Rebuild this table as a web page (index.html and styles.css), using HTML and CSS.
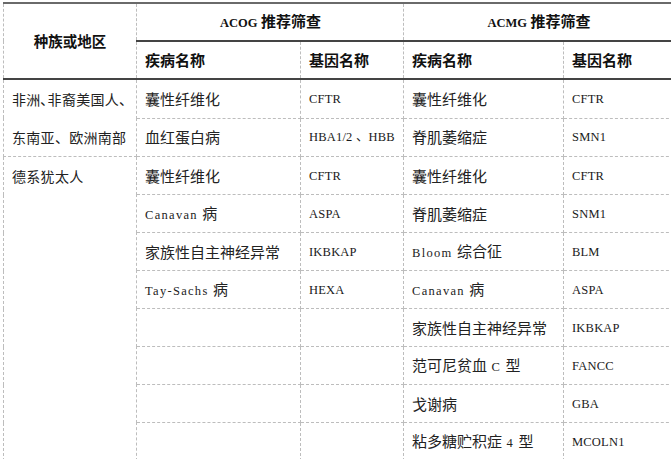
FILE: index.html
```html
<!DOCTYPE html>
<html lang="zh">
<head>
<meta charset="utf-8">
<title>携带者筛查推荐</title>
<link rel="stylesheet" href="styles.css">
</head>
<body>
<table class="screen">
  <colgroup>
    <col class="c-region">
    <col class="c-dis1">
    <col class="c-gene1">
    <col class="c-dis2">
    <col class="c-gene2">
  </colgroup>
  <thead>
    <tr>
      <th class="region-h" rowspan="2">种族或地区</th>
      <th class="group" colspan="2"><span class="en-b">ACOG</span> 推荐筛查</th>
      <th class="group" colspan="2"><span class="en-b">ACMG</span> 推荐筛查</th>
    </tr>
    <tr>
      <th class="sub">疾病名称</th>
      <th class="sub">基因名称</th>
      <th class="sub">疾病名称</th>
      <th class="sub">基因名称</th>
    </tr>
  </thead>
  <tbody>
    <tr>
      <td class="region" rowspan="2">非洲<span class="half">､</span>非裔美国人、<br>东南亚、欧洲南部</td>
      <td>囊性纤维化</td>
      <td class="gene">CFTR</td>
      <td>囊性纤维化</td>
      <td class="gene">CFTR</td>
    </tr>
    <tr>
      <td>血红蛋白病</td>
      <td class="gene">HBA1/2 、HBB</td>
      <td>脊肌萎缩症</td>
      <td class="gene">SMN1</td>
    </tr>
    <tr>
      <td class="region" rowspan="8">德系犹太人</td>
      <td>囊性纤维化</td>
      <td class="gene">CFTR</td>
      <td>囊性纤维化</td>
      <td class="gene">CFTR</td>
    </tr>
    <tr>
      <td><span class="en">Canavan </span>病</td>
      <td class="gene">ASPA</td>
      <td>脊肌萎缩症</td>
      <td class="gene">SNM1</td>
    </tr>
    <tr>
      <td>家族性自主神经异常</td>
      <td class="gene">IKBKAP</td>
      <td><span class="en">Bloom </span>综合征</td>
      <td class="gene">BLM</td>
    </tr>
    <tr>
      <td><span class="en">Tay-Sachs </span>病</td>
      <td class="gene">HEXA</td>
      <td><span class="en">Canavan </span>病</td>
      <td class="gene">ASPA</td>
    </tr>
    <tr>
      <td></td>
      <td></td>
      <td>家族性自主神经异常</td>
      <td class="gene">IKBKAP</td>
    </tr>
    <tr>
      <td></td>
      <td></td>
      <td>范可尼贫血<span class="en"> C </span>型</td>
      <td class="gene">FANCC</td>
    </tr>
    <tr>
      <td></td>
      <td></td>
      <td>戈谢病</td>
      <td class="gene">GBA</td>
    </tr>
    <tr>
      <td></td>
      <td></td>
      <td>粘多糖贮积症<span class="en"> 4 </span>型</td>
      <td class="gene">MCOLN1</td>
    </tr>
  </tbody>
</table>
</body>
</html>
```

FILE: styles.css
```css
html, body {
  margin: 0;
  padding: 0;
  background: #ffffff;
  overflow: hidden;
}

body {
  font-family: "Noto Sans CJK SC", "Noto Sans", sans-serif;
  color: #222222;
}

.screen {
  border-collapse: collapse;
  table-layout: fixed;
  width: 670px;
  margin: 2px 0 0 3px;
  border-top: 2px solid #6a6a6a;
  border-left: 1px dashed #bdbdbd;
}

.c-region { width: 133px; }
.c-dis1 { width: 164px; }
.c-gene1 { width: 103px; }
.c-dis2 { width: 160px; }
.c-gene2 { width: 110px; }

.screen th,
.screen td {
  border: 1px dashed #bdbdbd;
  height: 37px;
  padding: 0 7px 0 8px;
  font-size: 15px;
  line-height: 20px;
  text-align: left;
  vertical-align: middle;
  white-space: nowrap;
  overflow: hidden;
}

.screen th {
  font-weight: 700;
  color: #111111;
  height: 36px;
}

.screen th.group {
  text-align: center;
  border-bottom: 2px solid #444444;
}

.screen th.sub,
.screen th.region-h {
  border-bottom: 2px solid #444444;
}

.screen th.region-h {
  text-align: center;
  font-size: 14.5px;
  padding: 0;
}

.screen td.region {
  vertical-align: top;
  font-size: 14px;
  line-height: 38px;
  letter-spacing: 0.3px;
}

.half {
  letter-spacing: 0;
}

.screen td.gene {
  font-family: "Liberation Serif", "Noto Sans CJK SC", serif;
  font-size: 12.5px;
  letter-spacing: 0.2px;
  color: #1a1a1a;
}

.en {
  font-family: "Liberation Serif", serif;
  font-size: 12.5px;
  letter-spacing: 1.3px;
}

.en-b {
  font-family: "Liberation Serif", serif;
  font-size: 12.5px;
  font-weight: 700;
}
```
